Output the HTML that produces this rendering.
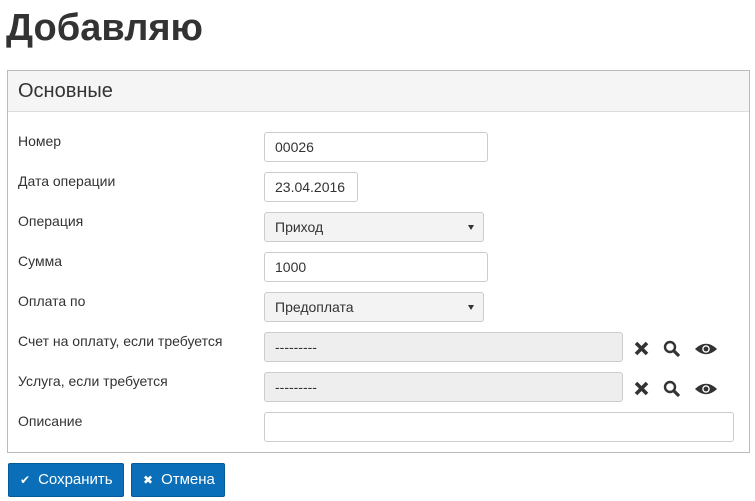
<!DOCTYPE html><html><head><meta charset="utf-8"><style>
body{margin:0;font-family:"Liberation Sans",sans-serif;color:#333;background:#fff;width:755px;height:501px;position:relative;overflow:hidden}
h1{position:absolute;left:6px;top:7px;margin:0;font-size:38px;font-weight:bold;color:#333}
.panel{position:absolute;left:7px;top:70px;width:741px;height:381px;border:1px solid #bbb}
.ph{height:40px;background:#f5f5f5;border-bottom:1px solid #ddd;font-size:20px;line-height:40px;padding-left:10px}
.l{position:absolute;left:18px;font-size:14px}
.i{position:absolute;left:264px;height:28px;border:1px solid #ccc;border-radius:3px;font-size:14px;line-height:28px;padding-left:10px;box-sizing:content-box;background:#fff}
.g{background:#eee}
.s{background:#f3f3f3}
.s:after{content:"";position:absolute;right:9px;top:12px;border:3px solid transparent;border-top:5px solid #333;border-bottom:0}
.b{position:absolute;top:463px;height:34px;background:#0a6fb8;border:1px solid #065a96;border-radius:2px;color:#fff;font-size:15px;line-height:32px;box-sizing:border-box}
.b span{font-size:12px;margin-right:8px}
</style></head><body>
<h1>Добавляю</h1>
<div class="panel"><div class="ph">Основные</div></div>
<div class="l" style="top:133px">Номер</div>
<div class="l" style="top:173px">Дата операции</div>
<div class="l" style="top:213px">Операция</div>
<div class="l" style="top:253px">Сумма</div>
<div class="l" style="top:293px">Оплата по</div>
<div class="l" style="top:333px">Счет на оплату, если требуется</div>
<div class="l" style="top:373px">Услуга, если требуется</div>
<div class="l" style="top:413px">Описание</div>
<div class="i" style="top:132px;width:212px">00026</div>
<div class="i" style="top:172px;width:82px">23.04.2016</div>
<div class="i s" style="top:212px;width:208px">Приход</div>
<div class="i" style="top:252px;width:212px">1000</div>
<div class="i s" style="top:292px;width:208px">Предоплата</div>
<div class="i g" style="top:332px;width:347px">---------</div>
<div class="i g" style="top:372px;width:347px">---------</div>
<div class="i" style="top:412px;width:458px"></div>
<svg style="position:absolute;left:632px;top:338px" width="90" height="60" viewBox="0 0 90 60">
<g fill="#333" stroke="#333">
<g id="r"><path d="M4 5 L15 16 M15 5 L4 16" stroke-width="3.6"/>
<circle cx="38" cy="9" r="5" fill="none" stroke-width="2.4"/><path d="M42 13 L47 18" stroke-width="3.2"/>
<path d="M64 11 Q74 2 84 11 Q74 20 64 11Z" stroke-width="1.4"/><circle cx="74" cy="11" r="3.8" fill="#fff" stroke="none"/><circle cx="74" cy="11" r="2.4" stroke="none"/></g>
<use href="#r" y="40"/></g></svg>
<div class="b" style="left:8px;width:116px;padding-left:11px"><span>✔</span>Сохранить</div>
<div class="b" style="left:131px;width:94px;padding-left:11px"><span>✖</span>Отмена</div>
</body></html>
